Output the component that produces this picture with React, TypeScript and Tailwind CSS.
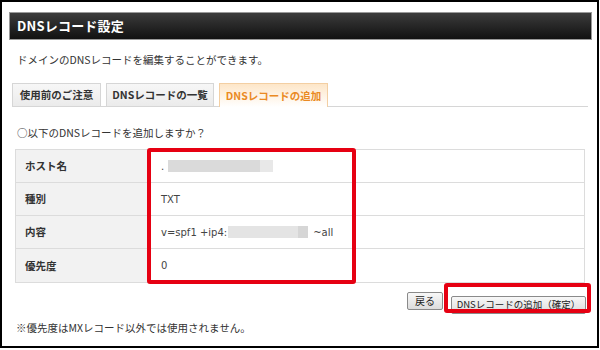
const font = { fontFamily: '"Noto Sans CJK JP", "Noto Sans", sans-serif' };
const latin = { fontFamily: '"DejaVu Sans", "Noto Sans CJK JP", sans-serif' };

function Tab({ label, active, width }: { label: string; active?: boolean; width: string }) {
  if (active) {
    return (
      <div
        className={`${width} h-[24px] -mb-px flex items-center justify-center border border-b-0 border-[#f3cfa3] bg-gradient-to-b from-[#fde6c8] to-white text-[10.5px] font-bold text-[#ea8a23]`}
      >
        {label}
      </div>
    );
  }
  return (
    <div
      className={`${width} h-[23px] flex items-center justify-center border border-b-0 border-[#d6d6d6] bg-gradient-to-b from-[#f7f7f7] to-[#ebebeb] text-[10.5px] font-bold text-[#333]`}
    >
      {label}
    </div>
  );
}

function Row({ label, children, last }: { label: string; children: React.ReactNode; last?: boolean }) {
  return (
    <div className={`flex h-[33px] ${last ? "" : "border-b border-[#dcdcdc]"}`}>
      <div className="w-[133px] shrink-0 flex items-center pl-[9px] bg-[#f2f2f2] border-r border-[#dcdcdc] text-[10.5px] font-bold text-[#333]">
        {label}
      </div>
      <div style={latin} className="flex-1 flex items-center pl-[12px] text-[10px] text-[#444]">
        {children}
      </div>
    </div>
  );
}

export default function App() {
  return (
    <div style={font} className="w-[600px] h-[350px] bg-white">
      <div className="w-[599px] h-[348px] border-2 border-black pt-[10px] pl-[7px] pr-[5px]">
        <div className="h-[28px] border border-[#9a9a9a] bg-gradient-to-b from-[#3c3c3c] to-[#121212] flex items-center pl-[7px]">
          <span className="text-white font-bold text-[13px] tracking-[0.2px]">DNSレコード設定</span>
        </div>

        <p className="pt-[12px] pl-[8px] text-[10.5px] leading-[16px] text-[#333]">
          ドメインのDNSレコードを編集することができます。
        </p>

        <div className="mt-[15px] ml-[3px] mr-[4px] flex items-end gap-[5px] border-b border-[#d6d6d6]">
          <Tab label="使用前のご注意" width="w-[89px]" />
          <Tab label="DNSレコードの一覧" width="w-[108px]" />
          <Tab label="DNSレコードの追加" width="w-[109px]" active />
        </div>

        <p className="mt-[18px] pl-[8px] text-[10.5px] leading-[16px] text-[#333]">
          ○以下のDNSレコードを追加しますか？
        </p>

        <div className="relative mt-[8px] ml-[6px] w-[570px] border border-[#dcdcdc]">
          <Row label="ホスト名">
            <span>.</span>
            <span className="ml-[4px] h-[12px] w-[92px] bg-[#dadada]" />
            <span className="h-[12px] w-[13px] bg-[#e8e8e8]" />
          </Row>
          <Row label="種別">
            <span>TXT</span>
          </Row>
          <Row label="内容">
            <span>v=spf1 +ip4:</span>
            <span className="ml-[1px] h-[12px] w-[70px] bg-[#e4e4e4]" />
            <span className="h-[12px] w-[10px] bg-[#d6d6d6]" />
            <span className="ml-[5px]">~all</span>
          </Row>
          <Row label="優先度" last>
            <span>0</span>
          </Row>
          <div className="absolute left-[131px] top-[-2px] w-[209px] h-[136px] border-[4px] border-[#e60012] rounded-[3px]" />
        </div>

        <div className="mt-[6px] w-[577px] flex justify-end items-center gap-[8px]">
          <button className="h-[18px] w-[36px] border border-[#8a8a8a] rounded-[2px] bg-gradient-to-b from-[#f8f8f8] to-[#dcdcdc] text-[10px] text-[#222] leading-none">
            戻る
          </button>
          <div className="relative">
            <button className="h-[18px] w-[135px] border border-[#8a8a8a] rounded-[2px] bg-gradient-to-b from-[#f8f8f8] to-[#dcdcdc] text-[9.5px] text-[#222] leading-none">
              DNSレコードの追加（確定）
            </button>
            <div className="absolute left-[-7px] top-[-6px] w-[147px] h-[30px] border-[4px] border-[#e60012] rounded-[3px]" />
          </div>
        </div>

        <p className="mt-[6px] pl-[7px] text-[10.5px] leading-[16px] text-[#333]">
          ※優先度はMXレコード以外では使用されません。
        </p>
      </div>
    </div>
  );
}
